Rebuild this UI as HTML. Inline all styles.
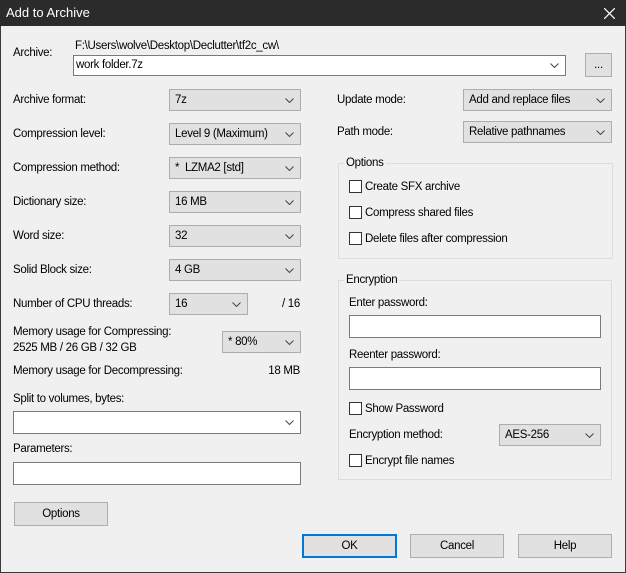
<!DOCTYPE html>
<html><head><meta charset="utf-8"><style>
*{box-sizing:border-box;margin:0;padding:0}
body{width:626px;height:573px;background:#f0f0f0;font-family:"Liberation Sans",sans-serif;font-size:11.5px;letter-spacing:-0.3px;color:#000;position:relative;overflow:hidden}
.frame{position:absolute;left:0;top:0;width:626px;height:573px;border:1px solid #3a3a3a}
.title{position:absolute;left:0;top:0;width:626px;height:26px;background:#2b2b2b;color:#fff;font-size:13px;letter-spacing:0;line-height:26px;padding-left:6px}
.x{position:absolute;right:11px;top:8px;width:11px;height:11px}
.l{position:absolute;white-space:nowrap;line-height:14px}
.cb{position:absolute;background:#e1e1e1;border:1px solid #adadad;padding-left:5px;line-height:20px;height:22px}
.in{position:absolute;background:#fff;border:1px solid #7a7a7a;height:23px}
.ch{position:absolute;right:6px;top:8px;width:9px;height:5px}
.btn{position:absolute;background:#e1e1e1;border:1px solid #adadad;text-align:center;line-height:22px;height:24px}
.grp{position:absolute;border:1px solid #dcdcdc}
.gl{position:absolute;background:#f0f0f0;padding:0 2px;line-height:14px}
.chk{position:absolute;width:13px;height:13px;border:1px solid #333;background:#fff}
</style></head><body>
<div class="frame"></div>
<div class="title">Add to Archive<svg class="x" viewBox="0 0 11 11"><path d="M0 0L11 11M11 0L0 11" stroke="#fff" stroke-width="1.2"/></svg></div>

<div class="l" style="left:13px;top:46px">Archive:</div>
<div class="l" style="left:75px;top:39px">F:\Users\wolve\Desktop\Declutter\tf2c_cw\</div>
<div class="in" style="left:73px;top:55px;width:493px;height:21px;padding-left:2px;line-height:19px">work folder.7z<svg class="ch" style="top:7px" viewBox="0 0 9 5"><path d="M0.5 0.5L4.5 4.5L8.5 0.5" stroke="#444" fill="none"/></svg></div>
<div class="btn" style="left:585px;top:53px;width:27px;height:24px">...</div>

<div class="l" style="left:13px;top:93px">Archive format:</div>
<div class="cb" style="left:169px;top:89px;width:132px">7z<svg class="ch" viewBox="0 0 9 5"><path d="M0.5 0.5L4.5 4.5L8.5 0.5" stroke="#444" fill="none"/></svg></div>
<div class="l" style="left:13px;top:127px">Compression level:</div>
<div class="cb" style="left:169px;top:123px;width:132px">Level 9 (Maximum)<svg class="ch" viewBox="0 0 9 5"><path d="M0.5 0.5L4.5 4.5L8.5 0.5" stroke="#444" fill="none"/></svg></div>
<div class="l" style="left:13px;top:161px">Compression method:</div>
<div class="cb" style="left:169px;top:157px;width:132px">*&nbsp; LZMA2 [std]<svg class="ch" viewBox="0 0 9 5"><path d="M0.5 0.5L4.5 4.5L8.5 0.5" stroke="#444" fill="none"/></svg></div>
<div class="l" style="left:13px;top:195px">Dictionary size:</div>
<div class="cb" style="left:169px;top:191px;width:132px">16 MB<svg class="ch" viewBox="0 0 9 5"><path d="M0.5 0.5L4.5 4.5L8.5 0.5" stroke="#444" fill="none"/></svg></div>
<div class="l" style="left:13px;top:229px">Word size:</div>
<div class="cb" style="left:169px;top:225px;width:132px">32<svg class="ch" viewBox="0 0 9 5"><path d="M0.5 0.5L4.5 4.5L8.5 0.5" stroke="#444" fill="none"/></svg></div>
<div class="l" style="left:13px;top:263px">Solid Block size:</div>
<div class="cb" style="left:169px;top:259px;width:132px">4 GB<svg class="ch" viewBox="0 0 9 5"><path d="M0.5 0.5L4.5 4.5L8.5 0.5" stroke="#444" fill="none"/></svg></div>
<div class="l" style="left:13px;top:297px">Number of CPU threads:</div>
<div class="cb" style="left:169px;top:293px;width:79px">16<svg class="ch" viewBox="0 0 9 5"><path d="M0.5 0.5L4.5 4.5L8.5 0.5" stroke="#444" fill="none"/></svg></div>
<div class="l" style="right:326px;top:297px">/ 16</div>
<div class="l" style="left:13px;top:325px">Memory usage for Compressing:</div>
<div class="l" style="left:13px;top:341px">2525 MB / 26 GB / 32 GB</div>
<div class="cb" style="left:222px;top:331px;width:79px">* 80%<svg class="ch" viewBox="0 0 9 5"><path d="M0.5 0.5L4.5 4.5L8.5 0.5" stroke="#444" fill="none"/></svg></div>
<div class="l" style="left:13px;top:364px">Memory usage for Decompressing:</div>
<div class="l" style="right:326px;top:364px">18 MB</div>
<div class="l" style="left:13px;top:392px">Split to volumes, bytes:</div>
<div class="in" style="left:13px;top:411px;width:288px;height:23px"><svg class="ch" viewBox="0 0 9 5"><path d="M0.5 0.5L4.5 4.5L8.5 0.5" stroke="#444" fill="none"/></svg></div>
<div class="l" style="left:13px;top:442px">Parameters:</div>
<div class="in" style="left:13px;top:462px;width:288px"></div>
<div class="btn" style="left:14px;top:502px;width:94px">Options</div>

<div class="l" style="left:337px;top:93px">Update mode:</div>
<div class="cb" style="left:463px;top:89px;width:149px">Add and replace files<svg class="ch" viewBox="0 0 9 5"><path d="M0.5 0.5L4.5 4.5L8.5 0.5" stroke="#444" fill="none"/></svg></div>
<div class="l" style="left:337px;top:125px">Path mode:</div>
<div class="cb" style="left:463px;top:121px;width:149px">Relative pathnames<svg class="ch" viewBox="0 0 9 5"><path d="M0.5 0.5L4.5 4.5L8.5 0.5" stroke="#444" fill="none"/></svg></div>

<div class="grp" style="left:338px;top:163px;width:275px;height:96px"></div>
<div class="gl" style="left:344px;top:156px">Options</div>
<div class="chk" style="left:349px;top:180px"></div><div class="l" style="left:365px;top:180px">Create SFX archive</div>
<div class="chk" style="left:349px;top:206px"></div><div class="l" style="left:365px;top:206px">Compress shared files</div>
<div class="chk" style="left:349px;top:232px"></div><div class="l" style="left:365px;top:232px">Delete files after compression</div>

<div class="grp" style="left:338px;top:280px;width:274px;height:200px"></div>
<div class="gl" style="left:344px;top:273px">Encryption</div>
<div class="l" style="left:349px;top:296px">Enter password:</div>
<div class="in" style="left:349px;top:315px;width:252px"></div>
<div class="l" style="left:349px;top:348px">Reenter password:</div>
<div class="in" style="left:349px;top:367px;width:252px"></div>
<div class="chk" style="left:349px;top:402px"></div><div class="l" style="left:365px;top:402px">Show Password</div>
<div class="l" style="left:349px;top:428px">Encryption method:</div>
<div class="cb" style="left:499px;top:424px;width:102px">AES-256<svg class="ch" viewBox="0 0 9 5"><path d="M0.5 0.5L4.5 4.5L8.5 0.5" stroke="#444" fill="none"/></svg></div>
<div class="chk" style="left:349px;top:454px"></div><div class="l" style="left:365px;top:454px">Encrypt file names</div>

<div class="btn" style="left:302px;top:534px;width:95px;border:2px solid #0078d7;line-height:20px">OK</div>
<div class="btn" style="left:410px;top:534px;width:94px">Cancel</div>
<div class="btn" style="left:518px;top:534px;width:94px">Help</div>
</body></html>
